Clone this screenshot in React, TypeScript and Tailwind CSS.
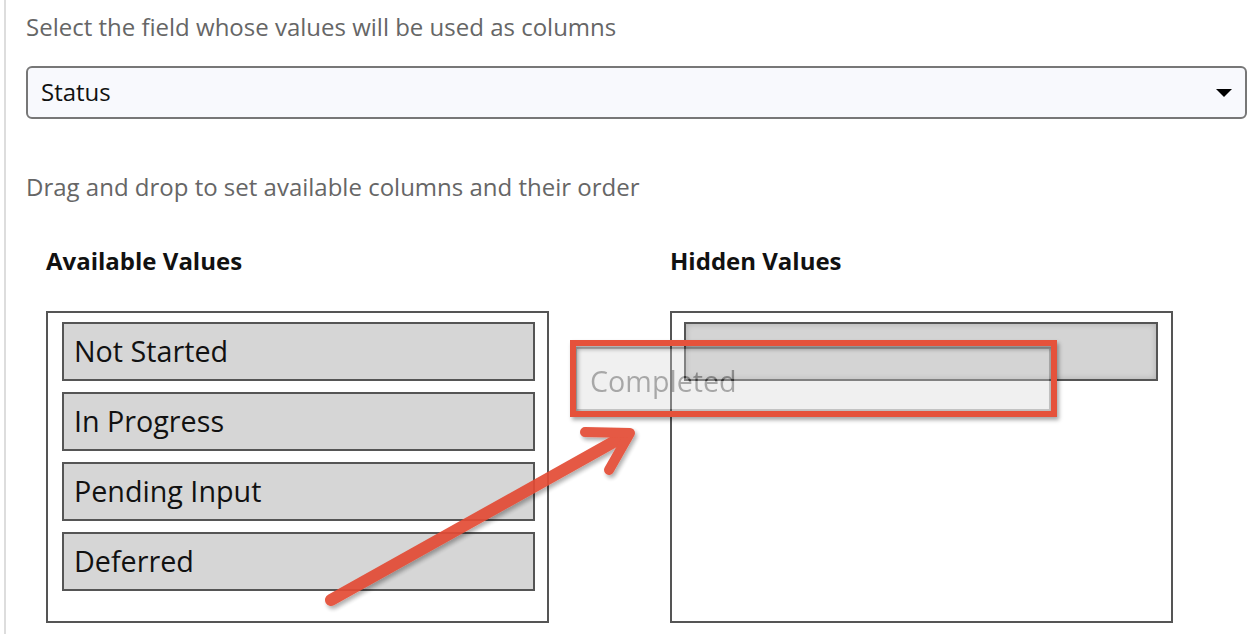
import React from "react";

const items = ["Not Started", "In Progress", "Pending Input", "Deferred"];

export default function App() {
  return (
    <div className="relative w-[1256px] h-[634px] overflow-hidden bg-white font-['Open_Sans',sans-serif]">
      <div className="ml-[4px] h-full border-l-2 border-[#dddddd] pl-[20px] pt-[10px]">
        <p className="text-[24px] leading-[33px] text-[#666666]">
          Select the field whose values will be used as columns
        </p>
        <div className="mt-[23px] flex h-[53px] w-[1221px] items-center justify-between rounded-[6px] border-2 border-[#777777] bg-[#f8f9fd] pl-[13px] pr-[13px]">
          <span className="-mt-[2px] text-[24px] leading-[33px] text-[#111111]">Status</span>
          <svg width="16" height="8" viewBox="0 0 16 8" className="mt-[1px]">
            <polygon points="0,0 16,0 8,8" fill="#000" />
          </svg>
        </div>
        <p className="mt-[51px] text-[24px] leading-[33px] text-[#666666]">
          Drag and drop to set available columns and their order
        </p>
        <div className="ml-[20px] mt-[42px] flex gap-[121px]">
          <div className="w-[503px]">
            <h2 className="text-[24px] font-bold leading-[31px] text-[#111111]">Available Values</h2>
            <div className="mt-[35px] flex h-[312px] flex-col gap-[11px] border-2 border-[#555555] pl-[14px] pt-[9px]">
              {items.map((t) => (
                <div
                  key={t}
                  className="flex h-[59px] w-[473px] items-center border-2 border-[#555555] bg-[#d6d6d6] pb-[2px] pl-[10px] text-[28.7px] text-[#111111]"
                >
                  {t}
                </div>
              ))}
            </div>
          </div>
          <div className="w-[503px]">
            <h2 className="text-[24px] font-bold leading-[31px] text-[#111111]">Hidden Values</h2>
            <div className="mt-[35px] h-[312px] border-2 border-[#555555] pl-[12px] pt-[9px]">
              <div className="h-[59px] w-[474px] border-2 border-[#555555] bg-[#d4d4d4] shadow-[inset_0_0_6px_rgba(0,0,0,0.18)]" />
            </div>
          </div>
        </div>
      </div>

      {/* dragged item (ghost) */}
      <div className="absolute left-[575px] top-[347px] flex h-[64px] w-[476px] items-center border-2 border-[#555555] bg-[#d6d6d6] pl-[13px] pt-[3px] text-[28.7px] text-[#000000] opacity-[0.34]">
        Completed
      </div>

      {/* red annotation rectangle */}
      <div className="pointer-events-none absolute left-[570px] top-[340px] h-[77px] w-[487px] border-[6px] border-[#e5523b] shadow-[2px_3px_4px_rgba(0,0,0,0.35),inset_2px_3px_4px_rgba(0,0,0,0.35)]" />

      {/* arrow annotation */}
      <svg
        className="pointer-events-none absolute left-0 top-0"
        width="1256"
        height="634"
        viewBox="0 0 1256 634"
      >
        <defs>
          <filter id="ds" x="-10%" y="-10%" width="130%" height="130%">
            <feDropShadow dx="2" dy="3" stdDeviation="2" floodColor="#000" floodOpacity="0.35" />
          </filter>
        </defs>
        <g filter="url(#ds)" opacity="0.92" stroke="#e34b34" strokeLinecap="round" strokeLinejoin="round" fill="none">
          <line x1="331" y1="600" x2="626" y2="435" strokeWidth="12" />
          <polyline points="585,432 630,433 609,470" strokeWidth="10" />
        </g>
      </svg>
    </div>
  );
}
